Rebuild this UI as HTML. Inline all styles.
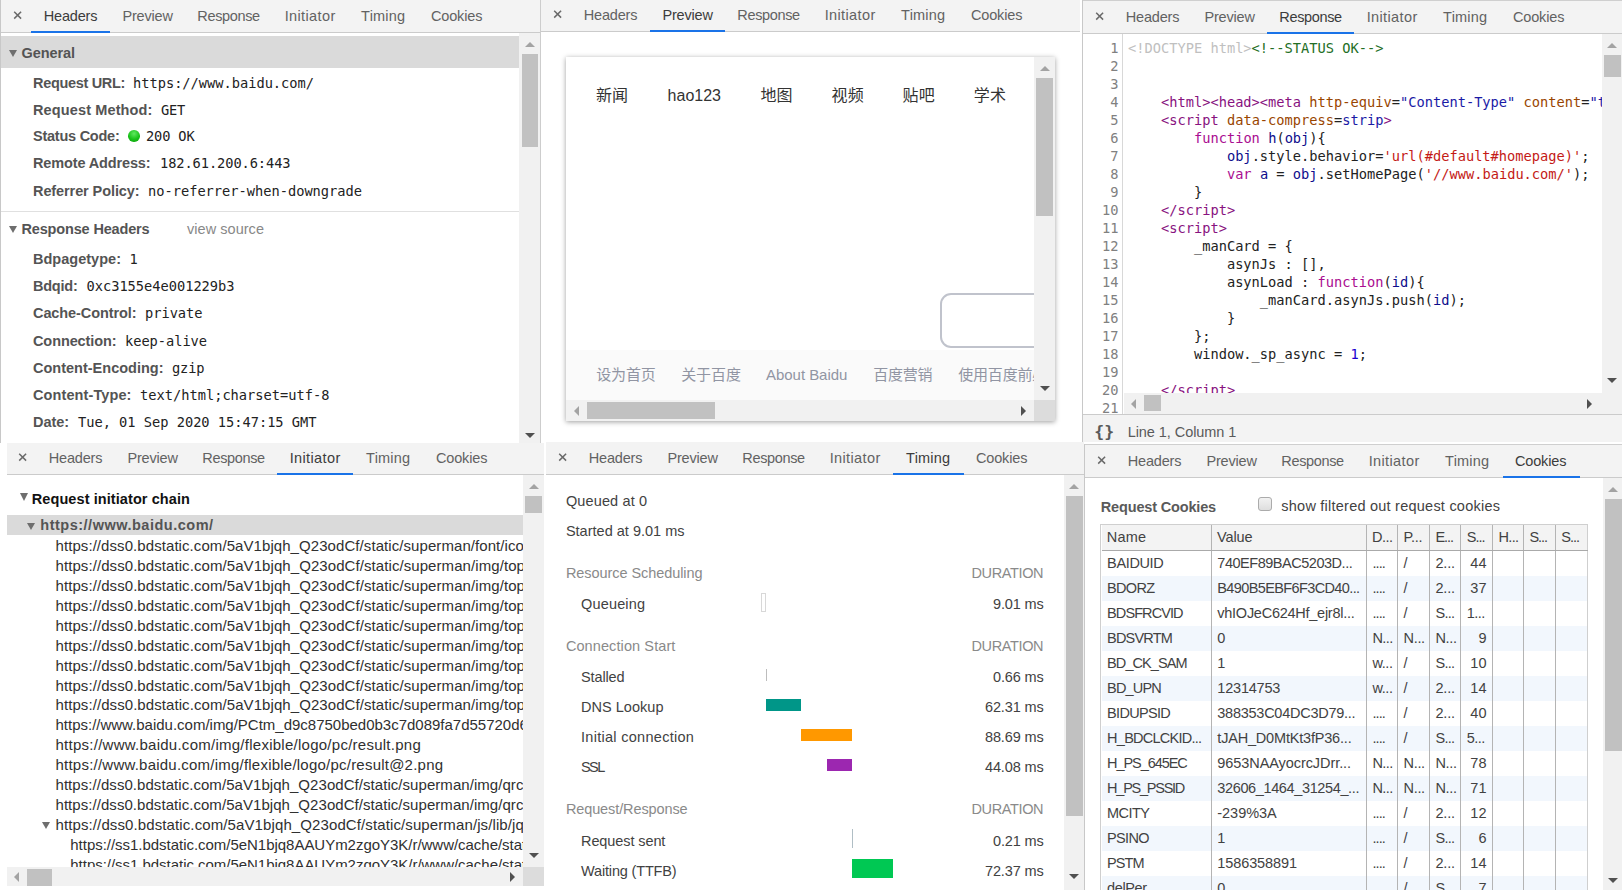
<!DOCTYPE html>
<html lang="en"><head><meta charset="utf-8"><title>DevTools network panels</title>
<style>
*{box-sizing:border-box;margin:0;padding:0}
html,body{width:1622px;height:890px;overflow:hidden;background:#fff}
body{position:relative;font-family:"Liberation Sans","Noto Sans CJK SC",sans-serif;font-size:14.5px;color:#222}
.b{position:absolute}
.c{position:absolute;overflow:hidden}
.t{position:absolute;white-space:pre;line-height:20px;height:20px}
.bd{font-weight:bold}
.m{font-family:"DejaVu Sans Mono","Liberation Mono",monospace;font-size:13.7px}
.tab{color:#626262}
.sel{color:#3c3c3c}
.u{font-size:15px}
.lbl{font-weight:bold;color:#545454}
</style></head>
<body>
<div class="c" style="left:0px;top:0px;width:541px;height:443px;background:#fff">
<div class="b" style="left:0px;top:0px;width:1px;height:443px;background:#c8c8c8;"></div>
<div class="b" style="left:540px;top:0px;width:1px;height:443px;background:#cdcdcd;"></div>
<div class="b" style="left:1px;top:0px;width:539px;height:32px;background:#f3f3f3;"></div>
<div class="b" style="left:1px;top:32px;width:539px;height:1px;background:#cbcbcb;"></div>
<svg class="b" style="left:10px;top:8px" width="14" height="14" viewBox="0 0 14 14"><path d="M4.20 3.72L11.10 10.62M11.10 3.72L4.20 10.62" stroke="#6a6a6a" stroke-width="1.5" fill="none"/></svg>
<span class="t tab sel" style="left:43.8px;top:6px;letter-spacing:-0.195px;">Headers</span>
<span class="t tab" style="left:122.4px;top:6px;letter-spacing:-0.183px;">Preview</span>
<span class="t tab" style="left:197.35px;top:6px;letter-spacing:-0.356px;">Response</span>
<span class="t tab" style="left:284.7px;top:6px;letter-spacing:0.371px;">Initiator</span>
<span class="t tab" style="left:361.1px;top:6px;letter-spacing:0.219px;">Timing</span>
<span class="t tab" style="left:430.9px;top:6px;letter-spacing:-0.127px;">Cookies</span>
<div class="b" style="left:31px;top:30.5px;width:79px;height:2.5px;background:#1a73e8;"></div>
<div class="b" style="left:1px;top:36px;width:518px;height:32px;background:#dadada;"></div>
<div class="b" style="left:8.7px;top:49.6px;border-left:4.8px solid transparent;border-right:4.8px solid transparent;border-top:7.4px solid #6e6e6e"></div>
<span class="t lbl" style="left:21.5px;top:42.5px;letter-spacing:-0.071px;">General</span>
<span class="t lbl" style="left:33px;top:72.6px;letter-spacing:-0.323px;">Request URL:</span>
<span class="t m" style="left:133px;top:72.8px;letter-spacing:-0.013px;">https://www.baidu.com/</span>
<span class="t lbl" style="left:33px;top:99.6px;letter-spacing:0.126px;">Request Method:</span>
<span class="t m" style="left:161px;top:99.8px;letter-spacing:-0.245px;">GET</span>
<span class="t lbl" style="left:33px;top:126.1px;letter-spacing:-0.243px;">Status Code:</span>
<span class="t m" style="left:146px;top:126.3px;letter-spacing:-0.159px;">200 OK</span>
<span class="t lbl" style="left:33px;top:153.1px;letter-spacing:-0.135px;">Remote Address:</span>
<span class="t m" style="left:160px;top:153.3px;letter-spacing:-0.085px;">182.61.200.6:443</span>
<span class="t lbl" style="left:33px;top:181.1px;letter-spacing:-0.094px;">Referrer Policy:</span>
<span class="t m" style="left:148px;top:181.3px;letter-spacing:-0.010px;">no-referrer-when-downgrade</span>
<div class="b" style="left:128px;top:130px;width:11.6px;height:11.6px;border-radius:50%;background:radial-gradient(circle at 50% 30%,#5fe85f 0%,#19c219 55%,#0a9a0a 100%)"></div>
<div class="b" style="left:1px;top:211px;width:518px;height:1px;background:#e0e0e0;"></div>
<div class="b" style="left:8.7px;top:226.1px;border-left:4.8px solid transparent;border-right:4.8px solid transparent;border-top:7.4px solid #6e6e6e"></div>
<span class="t lbl" style="left:21.5px;top:219px;letter-spacing:-0.160px;">Response Headers</span>
<span class="t " style="left:187px;top:219px;letter-spacing:0.040px;color:#888">view source</span>
<span class="t lbl" style="left:33px;top:248.6px;letter-spacing:0.016px;">Bdpagetype:</span>
<span class="t m" style="left:129.5px;top:248.8px;letter-spacing:-0.750px;">1</span>
<span class="t lbl" style="left:33px;top:275.6px;letter-spacing:-0.234px;">Bdqid:</span>
<span class="t m" style="left:86.5px;top:275.8px;letter-spacing:-0.019px;">0xc3155e4e001229b3</span>
<span class="t lbl" style="left:33px;top:302.6px;letter-spacing:-0.088px;">Cache-Control:</span>
<span class="t m" style="left:145px;top:302.8px;letter-spacing:-0.027px;">private</span>
<span class="t lbl" style="left:33px;top:330.6px;letter-spacing:-0.098px;">Connection:</span>
<span class="t m" style="left:125px;top:330.8px;letter-spacing:-0.041px;">keep-alive</span>
<span class="t lbl" style="left:33px;top:357.6px;letter-spacing:0.001px;">Content-Encoding:</span>
<span class="t m" style="left:172px;top:357.8px;letter-spacing:-0.117px;">gzip</span>
<span class="t lbl" style="left:33px;top:384.6px;letter-spacing:0.100px;">Content-Type:</span>
<span class="t m" style="left:140px;top:384.8px;letter-spacing:-0.002px;">text/html;charset=utf-8</span>
<span class="t lbl" style="left:33px;top:411.6px;letter-spacing:-0.053px;">Date:</span>
<span class="t m" style="left:78px;top:411.8px;letter-spacing:-0.017px;">Tue, 01 Sep 2020 15:47:15 GMT</span>
<div class="b" style="left:519px;top:33px;width:21px;height:410px;background:#f1f1f1;"></div>
<div class="b" style="left:521.5px;top:54px;width:16.5px;height:92.5px;background:#c1c1c1;"></div>
<div class="b" style="left:524.5px;top:41.75px;border-left:5px solid transparent;border-right:5px solid transparent;border-bottom:5.5px solid #a3a3a3"></div>
<div class="b" style="left:524.5px;top:432.75px;border-left:5px solid transparent;border-right:5px solid transparent;border-top:5.5px solid #505050"></div>
</div>
<div class="c" style="left:541px;top:0px;width:540px;height:443px;background:#fff">
<div class="b" style="left:0px;top:0px;width:539px;height:31px;background:#f3f3f3;"></div>
<div class="b" style="left:0px;top:31px;width:539px;height:1px;background:#cbcbcb;"></div>
<svg class="b" style="left:9px;top:7px" width="14" height="14" viewBox="0 0 14 14"><path d="M4.20 3.72L11.10 10.62M11.10 3.72L4.20 10.62" stroke="#6a6a6a" stroke-width="1.5" fill="none"/></svg>
<span class="t tab" style="left:42.8px;top:5px;letter-spacing:-0.195px;">Headers</span>
<span class="t tab sel" style="left:121.4px;top:5px;letter-spacing:-0.183px;">Preview</span>
<span class="t tab" style="left:196.35px;top:5px;letter-spacing:-0.356px;">Response</span>
<span class="t tab" style="left:283.7px;top:5px;letter-spacing:0.371px;">Initiator</span>
<span class="t tab" style="left:360.1px;top:5px;letter-spacing:0.219px;">Timing</span>
<span class="t tab" style="left:429.9px;top:5px;letter-spacing:-0.127px;">Cookies</span>
<div class="b" style="left:109px;top:29.5px;width:75px;height:2.5px;background:#1a73e8;"></div>
<div class="c" style="left:25px;top:57px;width:489px;height:364px;background:#fff;overflow:visible;box-shadow:0 1px 5px rgba(0,0,0,.38)">
<div class="c" style="left:0px;top:0px;width:468px;height:343px;background:#fff">
<span class="t " style="left:30px;top:26.5px;letter-spacing:-0.008px;font-family:'Liberation Sans','Noto Sans CJK SC',sans-serif;font-size:16px;color:#333;line-height:24px;height:24px">新闻</span>
<span class="t " style="left:101.6px;top:26.5px;letter-spacing:0.002px;font-family:'Liberation Sans','Noto Sans CJK SC',sans-serif;font-size:16px;color:#333;line-height:24px;height:24px">hao123</span>
<span class="t " style="left:194.6px;top:26.5px;letter-spacing:-0.008px;font-family:'Liberation Sans','Noto Sans CJK SC',sans-serif;font-size:16px;color:#333;line-height:24px;height:24px">地图</span>
<span class="t " style="left:265.4px;top:26.5px;letter-spacing:0.392px;font-family:'Liberation Sans','Noto Sans CJK SC',sans-serif;font-size:16px;color:#333;line-height:24px;height:24px">视频</span>
<span class="t " style="left:336.6px;top:26.5px;letter-spacing:0.192px;font-family:'Liberation Sans','Noto Sans CJK SC',sans-serif;font-size:16px;color:#333;line-height:24px;height:24px">贴吧</span>
<span class="t " style="left:407.8px;top:26.5px;letter-spacing:0.192px;font-family:'Liberation Sans','Noto Sans CJK SC',sans-serif;font-size:16px;color:#333;line-height:24px;height:24px">学术</span>
<div class="b" style="left:373.5px;top:236.3px;width:200px;height:54.6px;border:2px solid #c0c3cc;border-radius:11px;background:#fff"></div>
<div class="b" style="left:0px;top:293px;width:468px;height:50px;background:#fafafa;"></div>
<span class="t " style="left:30.2px;top:305.5px;letter-spacing:-0.129px;font-family:'Liberation Sans','Noto Sans CJK SC',sans-serif;font-size:15px;color:#9195a3;line-height:24px;height:24px">设为首页</span>
<span class="t " style="left:115.2px;top:305.5px;letter-spacing:-0.079px;font-family:'Liberation Sans','Noto Sans CJK SC',sans-serif;font-size:15px;color:#9195a3;line-height:24px;height:24px">关于百度</span>
<span class="t " style="left:200px;top:305.5px;letter-spacing:-0.039px;font-family:'Liberation Sans','Noto Sans CJK SC',sans-serif;font-size:15px;color:#9195a3;line-height:24px;height:24px">About Baidu</span>
<span class="t " style="left:307.2px;top:305.5px;letter-spacing:-0.229px;font-family:'Liberation Sans','Noto Sans CJK SC',sans-serif;font-size:15px;color:#9195a3;line-height:24px;height:24px">百度营销</span>
<span class="t " style="left:392.2px;top:305.5px;letter-spacing:-0.174px;font-family:'Liberation Sans','Noto Sans CJK SC',sans-serif;font-size:15px;color:#9195a3;line-height:24px;height:24px">使用百度前必读</span>
</div>
<div class="b" style="left:468px;top:0px;width:21px;height:343px;background:#f1f1f1;"></div>
<div class="b" style="left:470.4px;top:21px;width:16.4px;height:138px;background:#c1c1c1;"></div>
<div class="b" style="left:473.5px;top:9.05px;border-left:5px solid transparent;border-right:5px solid transparent;border-bottom:5.5px solid #a3a3a3"></div>
<div class="b" style="left:473.5px;top:328.55px;border-left:5px solid transparent;border-right:5px solid transparent;border-top:5.5px solid #505050"></div>
<div class="b" style="left:0px;top:343px;width:468px;height:21px;background:#f1f1f1;"></div>
<div class="b" style="left:21px;top:345px;width:128px;height:16.7px;background:#c1c1c1;"></div>
<div class="b" style="left:7.65px;top:348.5px;border-top:5px solid transparent;border-bottom:5px solid transparent;border-right:5.5px solid #a3a3a3"></div>
<div class="b" style="left:454.55px;top:348.5px;border-top:5px solid transparent;border-bottom:5px solid transparent;border-left:5.5px solid #505050"></div>
<div class="b" style="left:468px;top:343px;width:21px;height:21px;background:#dcdcdc;"></div>
</div>
</div>
<div class="c" style="left:1082px;top:0px;width:540px;height:443px;background:#fff">
<div class="b" style="left:0px;top:0px;width:540px;height:1px;background:#cfcfcf;"></div>
<div class="b" style="left:0px;top:0px;width:1px;height:442px;background:#c8c8c8;"></div>
<div class="b" style="left:1px;top:1px;width:539px;height:32px;background:#f3f3f3;"></div>
<div class="b" style="left:1px;top:33px;width:539px;height:1px;background:#cbcbcb;"></div>
<svg class="b" style="left:10px;top:9px" width="14" height="14" viewBox="0 0 14 14"><path d="M4.20 3.72L11.10 10.62M11.10 3.72L4.20 10.62" stroke="#6a6a6a" stroke-width="1.5" fill="none"/></svg>
<span class="t tab" style="left:43.8px;top:7px;letter-spacing:-0.195px;">Headers</span>
<span class="t tab" style="left:122.4px;top:7px;letter-spacing:-0.183px;">Preview</span>
<span class="t tab sel" style="left:197.35px;top:7px;letter-spacing:-0.356px;">Response</span>
<span class="t tab" style="left:284.7px;top:7px;letter-spacing:0.371px;">Initiator</span>
<span class="t tab" style="left:361.1px;top:7px;letter-spacing:0.219px;">Timing</span>
<span class="t tab" style="left:430.9px;top:7px;letter-spacing:-0.127px;">Cookies</span>
<div class="b" style="left:185px;top:31.5px;width:87px;height:2.5px;background:#1a73e8;"></div>
<div class="c" style="left:41px;top:34px;width:479px;height:359px;background:#fff">
<span class="t m" style="left:5px;top:4.3px;color:#222"><span style="color:#c0c0c0">&lt;!DOCTYPE html&gt;</span><span style="color:#236e25">&lt;!--STATUS OK--&gt;</span></span>
<span class="t m" style="left:5px;top:58.3px;color:#222">    <span style="color:#881280">&lt;html&gt;&lt;head&gt;&lt;meta </span><span style="color:#994500">http-equiv</span>=<span style="color:#1a1aa6">&quot;Content-Type&quot;</span> <span style="color:#994500">content</span>=<span style="color:#1a1aa6">&quot;text/html;charset=utf-8&quot;</span><span style="color:#881280">&gt;</span></span>
<span class="t m" style="left:5px;top:76.3px;color:#222">    <span style="color:#881280">&lt;script </span><span style="color:#994500">data-compress</span>=<span style="color:#1a1aa6">strip</span><span style="color:#881280">&gt;</span></span>
<span class="t m" style="left:5px;top:94.3px;color:#222">        <span style="color:#aa0d91">function</span> <span style="color:#0d0d8c">h</span>(<span style="color:#0d0d8c">obj</span>){</span>
<span class="t m" style="left:5px;top:112.3px;color:#222">            <span style="color:#0d0d8c">obj</span>.style.behavior=<span style="color:#c41a16">&#x27;url(#default#homepage)&#x27;</span>;</span>
<span class="t m" style="left:5px;top:130.3px;color:#222">            <span style="color:#aa0d91">var</span> <span style="color:#0d0d8c">a</span> = <span style="color:#0d0d8c">obj</span>.setHomePage(<span style="color:#c41a16">&#x27;//www.baidu.com/&#x27;</span>);</span>
<span class="t m" style="left:5px;top:148.3px;color:#222">        }</span>
<span class="t m" style="left:5px;top:166.3px;color:#222">    <span style="color:#881280">&lt;/script&gt;</span></span>
<span class="t m" style="left:5px;top:184.3px;color:#222">    <span style="color:#881280">&lt;script&gt;</span></span>
<span class="t m" style="left:5px;top:202.3px;color:#222">        _manCard = {</span>
<span class="t m" style="left:5px;top:220.3px;color:#222">            asynJs : [],</span>
<span class="t m" style="left:5px;top:238.3px;color:#222">            asynLoad : <span style="color:#aa0d91">function</span>(<span style="color:#0d0d8c">id</span>){</span>
<span class="t m" style="left:5px;top:256.3px;color:#222">                _manCard.asynJs.push(<span style="color:#0d0d8c">id</span>);</span>
<span class="t m" style="left:5px;top:274.3px;color:#222">            }</span>
<span class="t m" style="left:5px;top:292.3px;color:#222">        };</span>
<span class="t m" style="left:5px;top:310.3px;color:#222">        window._sp_async = <span style="color:#1c00cf">1</span>;</span>
<span class="t m" style="left:5px;top:346.3px;color:#222">    <span style="color:#881280">&lt;/script&gt;</span></span>
</div>
<div class="b" style="left:40px;top:34px;width:1px;height:381px;background:#d8d8d8;"></div>
<span class="t m" style="left:-363.5px;width:400px;text-align:right;top:38.3px;color:#808080">1</span>
<span class="t m" style="left:-363.5px;width:400px;text-align:right;top:56.3px;color:#808080">2</span>
<span class="t m" style="left:-363.5px;width:400px;text-align:right;top:74.3px;color:#808080">3</span>
<span class="t m" style="left:-363.5px;width:400px;text-align:right;top:92.3px;color:#808080">4</span>
<span class="t m" style="left:-363.5px;width:400px;text-align:right;top:110.3px;color:#808080">5</span>
<span class="t m" style="left:-363.5px;width:400px;text-align:right;top:128.3px;color:#808080">6</span>
<span class="t m" style="left:-363.5px;width:400px;text-align:right;top:146.3px;color:#808080">7</span>
<span class="t m" style="left:-363.5px;width:400px;text-align:right;top:164.3px;color:#808080">8</span>
<span class="t m" style="left:-363.5px;width:400px;text-align:right;top:182.3px;color:#808080">9</span>
<span class="t m" style="left:-363.5px;width:400px;text-align:right;top:200.3px;color:#808080">10</span>
<span class="t m" style="left:-363.5px;width:400px;text-align:right;top:218.3px;color:#808080">11</span>
<span class="t m" style="left:-363.5px;width:400px;text-align:right;top:236.3px;color:#808080">12</span>
<span class="t m" style="left:-363.5px;width:400px;text-align:right;top:254.3px;color:#808080">13</span>
<span class="t m" style="left:-363.5px;width:400px;text-align:right;top:272.3px;color:#808080">14</span>
<span class="t m" style="left:-363.5px;width:400px;text-align:right;top:290.3px;color:#808080">15</span>
<span class="t m" style="left:-363.5px;width:400px;text-align:right;top:308.3px;color:#808080">16</span>
<span class="t m" style="left:-363.5px;width:400px;text-align:right;top:326.3px;color:#808080">17</span>
<span class="t m" style="left:-363.5px;width:400px;text-align:right;top:344.3px;color:#808080">18</span>
<span class="t m" style="left:-363.5px;width:400px;text-align:right;top:362.3px;color:#808080">19</span>
<span class="t m" style="left:-363.5px;width:400px;text-align:right;top:380.3px;color:#808080">20</span>
<span class="t m" style="left:-363.5px;width:400px;text-align:right;top:398.3px;color:#808080">21</span>
<div class="b" style="left:41.5px;top:393px;width:478.5px;height:21.5px;background:#f1f1f1;"></div>
<div class="b" style="left:62.2px;top:395.2px;width:16.6px;height:16.2px;background:#c1c1c1;"></div>
<div class="b" style="left:48.85px;top:398.75px;border-top:5px solid transparent;border-bottom:5px solid transparent;border-right:5.5px solid #a3a3a3"></div>
<div class="b" style="left:505.25px;top:398.75px;border-top:5px solid transparent;border-bottom:5px solid transparent;border-left:5.5px solid #505050"></div>
<div class="b" style="left:520px;top:34px;width:20px;height:380.5px;background:#f1f1f1;"></div>
<div class="b" style="left:522.2px;top:55.2px;width:16.5px;height:21.8px;background:#c1c1c1;"></div>
<div class="b" style="left:525px;top:43.05px;border-left:5px solid transparent;border-right:5px solid transparent;border-bottom:5.5px solid #a3a3a3"></div>
<div class="b" style="left:525px;top:378.25px;border-left:5px solid transparent;border-right:5px solid transparent;border-top:5.5px solid #505050"></div>
<div class="b" style="left:1px;top:414px;width:539px;height:1px;background:#cbcbcb;"></div>
<div class="b" style="left:1px;top:415px;width:539px;height:27px;background:#f3f3f3;"></div>
<span class="t m bd" style="left:12.3px;top:421.5px;letter-spacing:0.013px;color:#5a5a5a;font-size:16.5px">{}</span>
<span class="t " style="left:45.7px;top:422px;letter-spacing:-0.064px;color:#5a5a5a">Line 1, Column 1</span>
</div>
<div class="c" style="left:7px;top:443px;width:537px;height:443.5px;background:#fff">
<div class="b" style="left:0px;top:0px;width:537px;height:31px;background:#f3f3f3;"></div>
<div class="b" style="left:0px;top:31px;width:537px;height:1px;background:#cbcbcb;"></div>
<svg class="b" style="left:8px;top:7px" width="14" height="14" viewBox="0 0 14 14"><path d="M4.20 3.72L11.10 10.62M11.10 3.72L4.20 10.62" stroke="#6a6a6a" stroke-width="1.5" fill="none"/></svg>
<span class="t tab" style="left:41.8px;top:5px;letter-spacing:-0.195px;">Headers</span>
<span class="t tab" style="left:120.4px;top:5px;letter-spacing:-0.183px;">Preview</span>
<span class="t tab" style="left:195.35px;top:5px;letter-spacing:-0.356px;">Response</span>
<span class="t tab sel" style="left:282.7px;top:5px;letter-spacing:0.371px;">Initiator</span>
<span class="t tab" style="left:359.1px;top:5px;letter-spacing:0.219px;">Timing</span>
<span class="t tab" style="left:428.9px;top:5px;letter-spacing:-0.127px;">Cookies</span>
<div class="b" style="left:270px;top:29.5px;width:76.2px;height:2.5px;background:#1a73e8;"></div>
<div class="c" style="left:0px;top:32px;width:516px;height:392px;background:#fff">
<div class="b" style="left:13px;top:18px;border-left:4px solid transparent;border-right:4px solid transparent;border-top:8px solid #6e6e6e"></div>
<span class="t bd" style="left:24.8px;top:13.5px;letter-spacing:0.082px;color:#111">Request initiator chain</span>
<div class="b" style="left:0px;top:40px;width:516px;height:19.7px;background:#dadada;"></div>
<div class="b" style="left:20.2px;top:47.6px;border-left:4.8px solid transparent;border-right:4.8px solid transparent;border-top:7.6px solid #6e6e6e"></div>
<span class="t lbl" style="left:33.3px;top:40.1px;letter-spacing:0.505px;">https://www.baidu.com/</span>
<span class="t u" style="left:48.5px;top:61.2px;letter-spacing:0.073px;color:#303030">https://dss0.bdstatic.com/5aV1bjqh_Q23odCf/static/superman/font/iconfont-fa013548a9.woff2</span>
<span class="t u" style="left:48.5px;top:81.1px;letter-spacing:0.077px;color:#303030">https://dss0.bdstatic.com/5aV1bjqh_Q23odCf/static/superman/img/topnav/baiduyun@2x-e0be79e69e.png</span>
<span class="t u" style="left:48.5px;top:101px;letter-spacing:0.077px;color:#303030">https://dss0.bdstatic.com/5aV1bjqh_Q23odCf/static/superman/img/topnav/zhidao@2x-e9b427ecc4.png</span>
<span class="t u" style="left:48.5px;top:120.9px;letter-spacing:0.077px;color:#303030">https://dss0.bdstatic.com/5aV1bjqh_Q23odCf/static/superman/img/topnav/baike@2x-1fe3db7fa6.png</span>
<span class="t u" style="left:48.5px;top:140.8px;letter-spacing:0.077px;color:#303030">https://dss0.bdstatic.com/5aV1bjqh_Q23odCf/static/superman/img/topnav/tupian@2x-482fc011fc.png</span>
<span class="t u" style="left:48.5px;top:160.7px;letter-spacing:0.077px;color:#303030">https://dss0.bdstatic.com/5aV1bjqh_Q23odCf/static/superman/img/topnav/baobaozhidao@2x-af409f9dbe.png</span>
<span class="t u" style="left:48.5px;top:180.6px;letter-spacing:0.077px;color:#303030">https://dss0.bdstatic.com/5aV1bjqh_Q23odCf/static/superman/img/topnav/wenku@2x-f3aba893c1.png</span>
<span class="t u" style="left:48.5px;top:200.5px;letter-spacing:0.077px;color:#303030">https://dss0.bdstatic.com/5aV1bjqh_Q23odCf/static/superman/img/topnav/jingyan@2x-e53eac48cb.png</span>
<span class="t u" style="left:48.5px;top:220.4px;letter-spacing:0.077px;color:#303030">https://dss0.bdstatic.com/5aV1bjqh_Q23odCf/static/superman/img/topnav/yinyue@2x-c18adacacb.png</span>
<span class="t u" style="left:48.5px;top:240.3px;letter-spacing:-0.008px;color:#303030">https://www.baidu.com/img/PCtm_d9c8750bed0b3c7d089fa7d55720d6cf.png</span>
<span class="t u" style="left:48.5px;top:260.2px;letter-spacing:0.258px;color:#303030">https://www.baidu.com/img/flexible/logo/pc/result.png</span>
<span class="t u" style="left:48.5px;top:280.1px;letter-spacing:0.225px;color:#303030">https://www.baidu.com/img/flexible/logo/pc/result@2.png</span>
<span class="t u" style="left:48.5px;top:300px;letter-spacing:0.054px;color:#303030">https://dss0.bdstatic.com/5aV1bjqh_Q23odCf/static/superman/img/qrcode/qrcode@2x-daf987ad02.png</span>
<span class="t u" style="left:48.5px;top:319.9px;letter-spacing:0.054px;color:#303030">https://dss0.bdstatic.com/5aV1bjqh_Q23odCf/static/superman/img/qrcode/qrcode-hover@2x-f9b106a848.png</span>
<span class="t u" style="left:48.5px;top:339.8px;letter-spacing:0.109px;color:#303030">https://dss0.bdstatic.com/5aV1bjqh_Q23odCf/static/superman/js/lib/jquery-1-edb203c114.10.2.js</span>
<span class="t u" style="left:63.3px;top:359.7px;letter-spacing:-0.030px;color:#303030">https://ss1.bdstatic.com/5eN1bjq8AAUYm2zgoY3K/r/www/cache/static/protocol/https/bundles/es6-polyfill_5645e88.js</span>
<span class="t u" style="left:63.3px;top:379.6px;letter-spacing:-0.030px;color:#303030">https://ss1.bdstatic.com/5eN1bjq8AAUYm2zgoY3K/r/www/cache/static/protocol/https/bundles/polyfill_9354efa.js</span>
<div class="b" style="left:35.2px;top:346.5px;border-left:4.8px solid transparent;border-right:4.8px solid transparent;border-top:7.6px solid #6e6e6e"></div>
</div>
<div class="b" style="left:516px;top:32px;width:21px;height:392px;background:#f1f1f1;"></div>
<div class="b" style="left:518px;top:53.2px;width:16.8px;height:16.5px;background:#c1c1c1;"></div>
<div class="b" style="left:521.5px;top:40.85px;border-left:5px solid transparent;border-right:5px solid transparent;border-bottom:5.5px solid #a3a3a3"></div>
<div class="b" style="left:521.5px;top:409.55px;border-left:5px solid transparent;border-right:5px solid transparent;border-top:5.5px solid #505050"></div>
<div class="b" style="left:0px;top:424px;width:516px;height:19px;background:#f1f1f1;"></div>
<div class="b" style="left:20.2px;top:426.3px;width:24.6px;height:16.7px;background:#c1c1c1;"></div>
<div class="b" style="left:6.85px;top:428.5px;border-top:5px solid transparent;border-bottom:5px solid transparent;border-right:5.5px solid #a3a3a3"></div>
<div class="b" style="left:502.55px;top:428.5px;border-top:5px solid transparent;border-bottom:5px solid transparent;border-left:5.5px solid #505050"></div>
<div class="b" style="left:516px;top:424px;width:21px;height:19px;background:#dcdcdc;"></div>
</div>
<div class="c" style="left:546px;top:442px;width:538px;height:448px;background:#fff">
<div class="b" style="left:0px;top:0px;width:538px;height:32px;background:#f3f3f3;"></div>
<div class="b" style="left:0px;top:32px;width:538px;height:1px;background:#cbcbcb;"></div>
<svg class="b" style="left:9px;top:8px" width="14" height="14" viewBox="0 0 14 14"><path d="M4.20 3.72L11.10 10.62M11.10 3.72L4.20 10.62" stroke="#6a6a6a" stroke-width="1.5" fill="none"/></svg>
<span class="t tab" style="left:42.8px;top:6px;letter-spacing:-0.195px;">Headers</span>
<span class="t tab" style="left:121.4px;top:6px;letter-spacing:-0.183px;">Preview</span>
<span class="t tab" style="left:196.35px;top:6px;letter-spacing:-0.356px;">Response</span>
<span class="t tab" style="left:283.7px;top:6px;letter-spacing:0.371px;">Initiator</span>
<span class="t tab sel" style="left:360.1px;top:6px;letter-spacing:0.219px;">Timing</span>
<span class="t tab" style="left:429.9px;top:6px;letter-spacing:-0.127px;">Cookies</span>
<div class="b" style="left:347.2px;top:30.5px;width:70.4px;height:2.5px;background:#1a73e8;"></div>
<span class="t " style="left:19.9px;top:48.5px;letter-spacing:0.134px;color:#424242">Queued at 0</span>
<span class="t " style="left:19.9px;top:78.8px;letter-spacing:0.012px;color:#424242">Started at 9.01 ms</span>
<span class="t " style="left:19.9px;top:120.5px;letter-spacing:-0.065px;color:#8a8a8a">Resource Scheduling</span>
<span class="t " style="left:425.5px;top:120.5px;letter-spacing:-0.370px;color:#8a8a8a">DURATION</span>
<span class="t " style="left:35px;top:152.4px;letter-spacing:0.164px;color:#424242">Queueing</span>
<span class="t " style="left:447px;top:152.4px;letter-spacing:-0.156px;color:#424242">9.01 ms</span>
<div class="b" style="left:215.2px;top:151.4px;width:5px;height:18.6px;border:1px solid #d8d8d8;background:#fff"></div>
<span class="t " style="left:19.9px;top:193.8px;letter-spacing:0.099px;color:#8a8a8a">Connection Start</span>
<span class="t " style="left:425.5px;top:193.8px;letter-spacing:-0.370px;color:#8a8a8a">DURATION</span>
<span class="t " style="left:35px;top:225.2px;letter-spacing:-0.121px;color:#424242">Stalled</span>
<span class="t " style="left:447px;top:225.2px;letter-spacing:-0.156px;color:#424242">0.66 ms</span>
<div class="b" style="left:219.8px;top:227.3px;width:1px;height:11.8px;background:#bdbdbd;"></div>
<span class="t " style="left:35px;top:255.4px;letter-spacing:0.028px;color:#424242">DNS Lookup</span>
<span class="t " style="left:439px;top:255.4px;letter-spacing:-0.145px;color:#424242">62.31 ms</span>
<div class="b" style="left:220px;top:257.4px;width:35.4px;height:11.3px;background:#009688;"></div>
<span class="t " style="left:35px;top:285.3px;letter-spacing:0.288px;color:#424242">Initial connection</span>
<span class="t " style="left:439px;top:285.3px;letter-spacing:-0.145px;color:#424242">88.69 ms</span>
<div class="b" style="left:255.4px;top:287.2px;width:50.6px;height:11.7px;background:#ff9800;"></div>
<span class="t " style="left:35px;top:315.2px;letter-spacing:-1.607px;color:#424242">SSL</span>
<span class="t " style="left:439px;top:315.2px;letter-spacing:-0.145px;color:#424242">44.08 ms</span>
<div class="b" style="left:281px;top:317px;width:24.9px;height:11.8px;background:#9c27b0;"></div>
<span class="t " style="left:19.9px;top:356.5px;letter-spacing:-0.108px;color:#8a8a8a">Request/Response</span>
<span class="t " style="left:425.5px;top:356.5px;letter-spacing:-0.370px;color:#8a8a8a">DURATION</span>
<span class="t " style="left:35px;top:388.6px;letter-spacing:-0.096px;color:#424242">Request sent</span>
<span class="t " style="left:447px;top:388.6px;letter-spacing:-0.156px;color:#424242">0.21 ms</span>
<div class="b" style="left:306.3px;top:387.2px;width:1px;height:18.5px;background:#b0bec5;"></div>
<span class="t " style="left:35px;top:418.6px;letter-spacing:-0.161px;color:#424242">Waiting (TTFB)</span>
<span class="t " style="left:439px;top:418.6px;letter-spacing:-0.145px;color:#424242">72.37 ms</span>
<div class="b" style="left:306px;top:417px;width:41px;height:18.8px;background:#00c853;"></div>
<div class="b" style="left:518px;top:33px;width:20px;height:415px;background:#f1f1f1;"></div>
<div class="b" style="left:520.4px;top:54.4px;width:16.2px;height:319.4px;background:#c1c1c1;"></div>
<div class="b" style="left:523px;top:42.25px;border-left:5px solid transparent;border-right:5px solid transparent;border-bottom:5.5px solid #a3a3a3"></div>
<div class="b" style="left:523px;top:432.45px;border-left:5px solid transparent;border-right:5px solid transparent;border-top:5.5px solid #505050"></div>
</div>
<div class="c" style="left:1084px;top:444px;width:538px;height:446px;background:#fff">
<div class="b" style="left:0px;top:0px;width:538px;height:1px;background:#cfcfcf;"></div>
<div class="b" style="left:0px;top:0px;width:1px;height:446px;background:#c8c8c8;"></div>
<div class="b" style="left:1px;top:1px;width:537px;height:32px;background:#f3f3f3;"></div>
<div class="b" style="left:1px;top:33px;width:537px;height:1px;background:#cbcbcb;"></div>
<svg class="b" style="left:10px;top:9px" width="14" height="14" viewBox="0 0 14 14"><path d="M4.20 3.72L11.10 10.62M11.10 3.72L4.20 10.62" stroke="#6a6a6a" stroke-width="1.5" fill="none"/></svg>
<span class="t tab" style="left:43.8px;top:7px;letter-spacing:-0.195px;">Headers</span>
<span class="t tab" style="left:122.4px;top:7px;letter-spacing:-0.183px;">Preview</span>
<span class="t tab" style="left:197.35px;top:7px;letter-spacing:-0.356px;">Response</span>
<span class="t tab" style="left:284.7px;top:7px;letter-spacing:0.371px;">Initiator</span>
<span class="t tab" style="left:361.1px;top:7px;letter-spacing:0.219px;">Timing</span>
<span class="t tab sel" style="left:430.9px;top:7px;letter-spacing:-0.127px;">Cookies</span>
<div class="b" style="left:418.6px;top:31.5px;width:77.1px;height:2.5px;background:#1a73e8;"></div>
<span class="t lbl" style="left:16.8px;top:52.5px;letter-spacing:-0.164px;color:#5a5a5a">Request Cookies</span>
<div class="b" style="left:174px;top:53px;width:14px;height:14px;border:1px solid #ababab;border-radius:3px;background:linear-gradient(#f2f2f2,#dedede)"></div>
<span class="t " style="left:197.3px;top:52.2px;letter-spacing:0.234px;color:#424242">show filtered out request cookies</span>
<div class="b" style="left:18px;top:80px;width:486px;height:26px;background:#f3f3f3;"></div>
<span class="t " style="left:23.1px;top:109.3px;letter-spacing:-0.361px;color:#424242">BAIDUID</span>
<span class="t " style="left:133.3px;top:109.3px;letter-spacing:-0.471px;color:#424242">740EF89BAC5203D...</span>
<span class="t " style="left:288.4px;top:109.3px;letter-spacing:-0.881px;color:#424242">....</span>
<span class="t " style="left:319.6px;top:109.3px;color:#424242">/</span>
<span class="t " style="left:351.4px;top:109.3px;letter-spacing:-0.139px;color:#424242">2...</span>
<span class="t " style="left:2.5px;width:400px;text-align:right;top:109.3px;color:#424242">44</span>
<div class="b" style="left:18px;top:132px;width:485px;height:25px;background:#f2f7fd;"></div>
<span class="t " style="left:23.1px;top:134.3px;letter-spacing:-0.710px;color:#424242">BDORZ</span>
<span class="t " style="left:133.3px;top:134.3px;letter-spacing:-0.619px;color:#424242">B490B5EBF6F3CD40...</span>
<span class="t " style="left:288.4px;top:134.3px;letter-spacing:-0.881px;color:#424242">....</span>
<span class="t " style="left:319.6px;top:134.3px;color:#424242">/</span>
<span class="t " style="left:351.4px;top:134.3px;letter-spacing:-0.139px;color:#424242">2...</span>
<span class="t " style="left:2.5px;width:400px;text-align:right;top:134.3px;color:#424242">37</span>
<span class="t " style="left:23.1px;top:159.3px;letter-spacing:-0.922px;color:#424242">BDSFRCVID</span>
<span class="t " style="left:133.3px;top:159.3px;letter-spacing:-0.260px;color:#424242">vhIOJeC624Hf_ejr8l...</span>
<span class="t " style="left:288.4px;top:159.3px;letter-spacing:-0.881px;color:#424242">....</span>
<span class="t " style="left:319.6px;top:159.3px;color:#424242">/</span>
<span class="t " style="left:351.4px;top:159.3px;letter-spacing:-0.666px;color:#424242">S...</span>
<span class="t " style="left:382.8px;top:159.3px;letter-spacing:-0.539px;color:#424242">1...</span>
<div class="b" style="left:18px;top:182px;width:485px;height:25px;background:#f2f7fd;"></div>
<span class="t " style="left:23.1px;top:184.3px;letter-spacing:-0.820px;color:#424242">BDSVRTM</span>
<span class="t " style="left:133.3px;top:184.3px;color:#424242">0</span>
<span class="t " style="left:288.4px;top:184.3px;letter-spacing:-0.541px;color:#424242">N...</span>
<span class="t " style="left:319.6px;top:184.3px;letter-spacing:-0.341px;color:#424242">N...</span>
<span class="t " style="left:351.4px;top:184.3px;letter-spacing:-0.341px;color:#424242">N...</span>
<span class="t " style="left:2.5px;width:400px;text-align:right;top:184.3px;color:#424242">9</span>
<span class="t " style="left:23.1px;top:209.3px;letter-spacing:-0.916px;color:#424242">BD_CK_SAM</span>
<span class="t " style="left:133.3px;top:209.3px;color:#424242">1</span>
<span class="t " style="left:288.4px;top:209.3px;letter-spacing:-0.391px;color:#424242">w...</span>
<span class="t " style="left:319.6px;top:209.3px;color:#424242">/</span>
<span class="t " style="left:351.4px;top:209.3px;letter-spacing:-0.666px;color:#424242">S...</span>
<span class="t " style="left:2.5px;width:400px;text-align:right;top:209.3px;color:#424242">10</span>
<div class="b" style="left:18px;top:232px;width:485px;height:25px;background:#f2f7fd;"></div>
<span class="t " style="left:23.1px;top:234.3px;letter-spacing:-0.838px;color:#424242">BD_UPN</span>
<span class="t " style="left:133.3px;top:234.3px;letter-spacing:-0.202px;color:#424242">12314753</span>
<span class="t " style="left:288.4px;top:234.3px;letter-spacing:-0.391px;color:#424242">w...</span>
<span class="t " style="left:319.6px;top:234.3px;color:#424242">/</span>
<span class="t " style="left:351.4px;top:234.3px;letter-spacing:-0.139px;color:#424242">2...</span>
<span class="t " style="left:2.5px;width:400px;text-align:right;top:234.3px;color:#424242">14</span>
<span class="t " style="left:23.1px;top:259.3px;letter-spacing:-0.700px;color:#424242">BIDUPSID</span>
<span class="t " style="left:133.3px;top:259.3px;letter-spacing:-0.255px;color:#424242">388353C04DC3D79...</span>
<span class="t " style="left:288.4px;top:259.3px;letter-spacing:-0.881px;color:#424242">....</span>
<span class="t " style="left:319.6px;top:259.3px;color:#424242">/</span>
<span class="t " style="left:351.4px;top:259.3px;letter-spacing:-0.139px;color:#424242">2...</span>
<span class="t " style="left:2.5px;width:400px;text-align:right;top:259.3px;color:#424242">40</span>
<div class="b" style="left:18px;top:282px;width:485px;height:25px;background:#f2f7fd;"></div>
<span class="t " style="left:23.1px;top:284.3px;letter-spacing:-0.750px;color:#424242">H_BDCLCKID...</span>
<span class="t " style="left:133.3px;top:284.3px;letter-spacing:-0.190px;color:#424242">tJAH_D0MtKt3fP36...</span>
<span class="t " style="left:288.4px;top:284.3px;letter-spacing:-0.881px;color:#424242">....</span>
<span class="t " style="left:319.6px;top:284.3px;color:#424242">/</span>
<span class="t " style="left:351.4px;top:284.3px;letter-spacing:-0.666px;color:#424242">S...</span>
<span class="t " style="left:382.8px;top:284.3px;letter-spacing:-0.539px;color:#424242">5...</span>
<span class="t " style="left:23.1px;top:309.3px;letter-spacing:-1.068px;color:#424242">H_PS_645EC</span>
<span class="t " style="left:133.3px;top:309.3px;letter-spacing:-0.075px;color:#424242">9653NAAyocrcJDrr...</span>
<span class="t " style="left:288.4px;top:309.3px;letter-spacing:-0.541px;color:#424242">N...</span>
<span class="t " style="left:319.6px;top:309.3px;letter-spacing:-0.341px;color:#424242">N...</span>
<span class="t " style="left:351.4px;top:309.3px;letter-spacing:-0.341px;color:#424242">N...</span>
<span class="t " style="left:2.5px;width:400px;text-align:right;top:309.3px;color:#424242">78</span>
<div class="b" style="left:18px;top:332px;width:485px;height:25px;background:#f2f7fd;"></div>
<span class="t " style="left:23.1px;top:334.3px;letter-spacing:-1.247px;color:#424242">H_PS_PSSID</span>
<span class="t " style="left:133.3px;top:334.3px;letter-spacing:-0.369px;color:#424242">32606_1464_31254_...</span>
<span class="t " style="left:288.4px;top:334.3px;letter-spacing:-0.541px;color:#424242">N...</span>
<span class="t " style="left:319.6px;top:334.3px;letter-spacing:-0.341px;color:#424242">N...</span>
<span class="t " style="left:351.4px;top:334.3px;letter-spacing:-0.341px;color:#424242">N...</span>
<span class="t " style="left:2.5px;width:400px;text-align:right;top:334.3px;color:#424242">71</span>
<span class="t " style="left:23.1px;top:359.3px;letter-spacing:-0.582px;color:#424242">MCITY</span>
<span class="t " style="left:133.3px;top:359.3px;letter-spacing:-0.037px;color:#424242">-239%3A</span>
<span class="t " style="left:288.4px;top:359.3px;letter-spacing:-0.881px;color:#424242">....</span>
<span class="t " style="left:319.6px;top:359.3px;color:#424242">/</span>
<span class="t " style="left:351.4px;top:359.3px;letter-spacing:-0.139px;color:#424242">2...</span>
<span class="t " style="left:2.5px;width:400px;text-align:right;top:359.3px;color:#424242">12</span>
<div class="b" style="left:18px;top:382px;width:485px;height:25px;background:#f2f7fd;"></div>
<span class="t " style="left:23.1px;top:384.3px;letter-spacing:-0.685px;color:#424242">PSINO</span>
<span class="t " style="left:133.3px;top:384.3px;color:#424242">1</span>
<span class="t " style="left:288.4px;top:384.3px;letter-spacing:-0.881px;color:#424242">....</span>
<span class="t " style="left:319.6px;top:384.3px;color:#424242">/</span>
<span class="t " style="left:351.4px;top:384.3px;letter-spacing:-0.666px;color:#424242">S...</span>
<span class="t " style="left:2.5px;width:400px;text-align:right;top:384.3px;color:#424242">6</span>
<span class="t " style="left:23.1px;top:409.3px;letter-spacing:-0.920px;color:#424242">PSTM</span>
<span class="t " style="left:133.3px;top:409.3px;letter-spacing:-0.106px;color:#424242">1586358891</span>
<span class="t " style="left:288.4px;top:409.3px;letter-spacing:-0.881px;color:#424242">....</span>
<span class="t " style="left:319.6px;top:409.3px;color:#424242">/</span>
<span class="t " style="left:351.4px;top:409.3px;letter-spacing:-0.139px;color:#424242">2...</span>
<span class="t " style="left:2.5px;width:400px;text-align:right;top:409.3px;color:#424242">14</span>
<div class="b" style="left:18px;top:432px;width:485px;height:25px;background:#f2f7fd;"></div>
<span class="t " style="left:23.1px;top:434.3px;letter-spacing:-0.404px;color:#424242">delPer</span>
<span class="t " style="left:133.3px;top:434.3px;color:#424242">0</span>
<span class="t " style="left:288.4px;top:434.3px;letter-spacing:-0.881px;color:#424242">....</span>
<span class="t " style="left:319.6px;top:434.3px;color:#424242">/</span>
<span class="t " style="left:351.4px;top:434.3px;letter-spacing:-0.666px;color:#424242">S...</span>
<span class="t " style="left:2.5px;width:400px;text-align:right;top:434.3px;color:#424242">7</span>
<span class="t " style="left:22.8px;top:83.3px;letter-spacing:0.178px;color:#424242">Name</span>
<span class="t " style="left:133px;top:83.3px;letter-spacing:-0.123px;color:#424242">Value</span>
<span class="t " style="left:288px;top:83.3px;letter-spacing:-0.541px;color:#424242">D...</span>
<span class="t " style="left:319.6px;top:83.3px;letter-spacing:-0.298px;color:#424242">P...</span>
<span class="t " style="left:351.4px;top:83.3px;letter-spacing:-1.041px;color:#424242">E...</span>
<span class="t " style="left:382.8px;top:83.3px;letter-spacing:-1.016px;color:#424242">S...</span>
<span class="t " style="left:414.6px;top:83.3px;letter-spacing:-0.716px;color:#424242">H...</span>
<span class="t " style="left:445.4px;top:83.3px;letter-spacing:-1.041px;color:#424242">S...</span>
<span class="t " style="left:477.3px;top:83.3px;letter-spacing:-1.016px;color:#424242">S...</span>
<div class="b" style="left:16px;top:80px;width:1px;height:366px;background:#cfcfcf;"></div>
<div class="b" style="left:127px;top:80px;width:1px;height:366px;background:#b4b4b4;"></div>
<div class="b" style="left:282px;top:80px;width:1px;height:366px;background:#b4b4b4;"></div>
<div class="b" style="left:313px;top:80px;width:1px;height:366px;background:#b4b4b4;"></div>
<div class="b" style="left:345px;top:80px;width:1px;height:366px;background:#b4b4b4;"></div>
<div class="b" style="left:376px;top:80px;width:1px;height:366px;background:#b4b4b4;"></div>
<div class="b" style="left:408px;top:80px;width:1px;height:366px;background:#b4b4b4;"></div>
<div class="b" style="left:439px;top:80px;width:1px;height:366px;background:#b4b4b4;"></div>
<div class="b" style="left:471px;top:80px;width:1px;height:366px;background:#b4b4b4;"></div>
<div class="b" style="left:503px;top:80px;width:1px;height:366px;background:#cfcfcf;"></div>
<div class="b" style="left:16px;top:80px;width:488px;height:1px;background:#cfcfcf;"></div>
<div class="b" style="left:18px;top:106px;width:486px;height:1px;background:#aaaaaa;"></div>
<div class="b" style="left:519px;top:34px;width:19px;height:412px;background:#f1f1f1;"></div>
<div class="b" style="left:521.4px;top:55.3px;width:16.6px;height:251.3px;background:#c1c1c1;"></div>
<div class="b" style="left:523.5px;top:42.85px;border-left:5px solid transparent;border-right:5px solid transparent;border-bottom:5.5px solid #a3a3a3"></div>
<div class="b" style="left:523.5px;top:433.75px;border-left:5px solid transparent;border-right:5px solid transparent;border-top:5.5px solid #505050"></div>
</div>
</body></html>
